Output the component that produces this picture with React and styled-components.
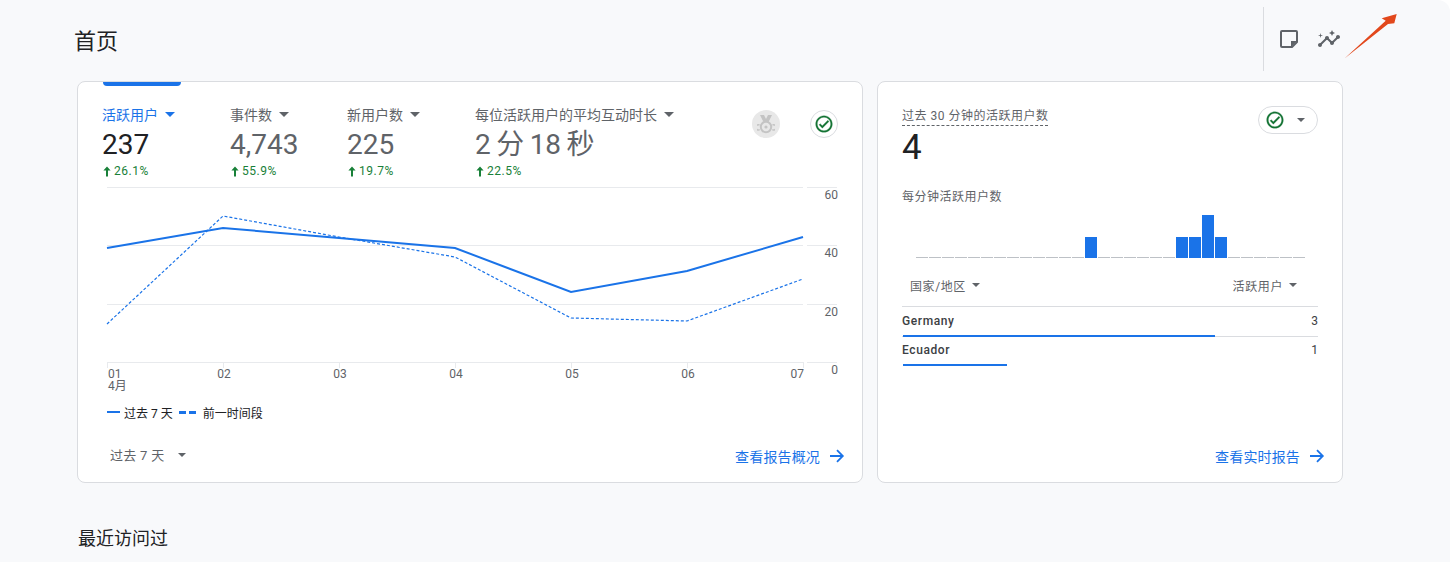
import React from "react";
import styled, { createGlobalStyle } from "styled-components";

const GlobalStyle = createGlobalStyle`
  html, body {
    margin: 0;
    padding: 0;
    background: #fff;
    font-family: Roboto, "Noto Sans CJK SC", sans-serif;
    color: #5f6368;
  }
`;

const Page = styled.div`
  position: relative;
  width: 1450px;
  height: 562px;
  overflow: hidden;
  background: #f8f9fb;
  border-top-right-radius: 12px;
`;

const Header = styled.header`
  display: flex;
  align-items: center;
  height: 81px;
  padding-left: 74px;
  box-sizing: border-box;
`;

const Title = styled.h1`
  margin: -4px 0 0;
  font-size: 22px;
  font-weight: 400;
  color: #202124;
`;

const HeaderTools = styled.div`
  display: flex;
  align-items: center;
  gap: 16px;
  height: 64px;
  margin: -3px 109px 0 auto;
  padding-left: 13px;
  border-left: 1px solid #dadce0;
`;

const Cards = styled.div`
  display: flex;
  gap: 14px;
  padding-left: 77px;
`;

const Card = styled.section`
  display: flex;
  flex-direction: column;
  box-sizing: border-box;
  width: ${(p) => p.$width}px;
  height: 402px;
  background: #fff;
  border: 1px solid #dadce0;
  border-radius: 8px;
`;

const TabMarker = styled.div`
  width: 78px;
  height: 4px;
  margin-left: 25px;
  background: #1a73e8;
  border-radius: 0 0 4px 4px;
`;

const MetricRow = styled.div`
  display: flex;
  height: 94px;
  padding: 19px 24px 0;
  box-sizing: border-box;
`;

const Metric = styled.div`
  width: ${(p) => p.$width}px;
  flex: none;
`;

const MetricLabel = styled.div`
  display: flex;
  align-items: center;
  gap: 7px;
  height: 18px;
  font-size: 14px;
  color: ${(p) => (p.$active ? "#1a73e8" : "#5f6368")};
`;

const Caret = styled.span`
  flex: none;
  width: 0;
  height: 0;
  border-left: ${(p) => p.$size || 5}px solid transparent;
  border-right: ${(p) => p.$size || 5}px solid transparent;
  border-top: ${(p) => p.$size || 5}px solid ${(p) => p.$color || "#5f6368"};
`;

const MetricValue = styled.div`
  height: 34px;
  margin-top: 5px;
  font-size: 28px;
  line-height: 34px;
  word-spacing: -1.5px;
  color: ${(p) => (p.$active ? "#202124" : "#5f6368")};
`;

const Delta = styled.div`
  display: flex;
  align-items: center;
  gap: 3px;
  height: 16px;
  margin-top: 1px;
  padding-left: 1px;
  font-size: 12px;
  letter-spacing: 0.5px;
  color: #188038;
`;

const MetricBadges = styled.div`
  display: flex;
  gap: 30px;
  margin-left: auto;
  margin-top: 5px;
`;

const RoundBadge = styled.div`
  display: flex;
  align-items: center;
  justify-content: center;
  box-sizing: border-box;
  width: 28px;
  height: 28px;
  border-radius: 50%;
  background: ${(p) => (p.$muted ? "#e8e8e8" : "#fff")};
  border: ${(p) => (p.$muted ? "none" : "1px solid #dadce0")};
`;

const ChartSvg = styled.svg`
  display: block;
  flex: none;
  margin-left: 22px;
`;

const AxisText = styled.text`
  font-size: 12px;
  fill: #5f6368;
  font-family: Roboto, "Noto Sans CJK SC", sans-serif;
`;

const Legend = styled.div`
  display: flex;
  align-items: center;
  height: 20px;
  margin: 7px 0 0 29px;
  font-size: 12px;
  color: #202124;
`;

const LegendLine = styled.span`
  width: 13px;
  height: 2px;
  margin-right: 4px;
  background: #1a73e8;
`;

const LegendDashes = styled.span`
  width: 17px;
  height: 3px;
  margin: 0 7px 0 6px;
  background: repeating-linear-gradient(90deg, #1a73e8 0 7px, transparent 7px 10px);
`;

const CardFooter = styled.div`
  display: flex;
  align-items: center;
  justify-content: space-between;
  height: 24px;
  margin-top: auto;
  margin-bottom: 14px;
  padding: 0 17px 0 32px;
`;

const RangeSelect = styled.div`
  display: flex;
  align-items: center;
  gap: 13px;
  margin-top: -3px;
  font-size: 13px;
  letter-spacing: 0.3px;
  color: #5f6368;
`;

const ReportLink = styled.a`
  display: flex;
  align-items: center;
  gap: 9px;
  margin-left: auto;
  font-size: 14px;
  letter-spacing: 0.15px;
  color: #1a73e8;
`;

const RealtimeTop = styled.div`
  display: flex;
  justify-content: space-between;
  padding: 24px 24px 0;
`;

const DashedTitle = styled.div`
  width: fit-content;
  height: 17px;
  padding-top: 2px;
  font-size: 12px;
  letter-spacing: 0.5px;
  line-height: 17px;
  border-bottom: 1px dashed #5f6368;
`;

const BigCount = styled.div`
  height: 44px;
  font-size: 35px;
  line-height: 44px;
  color: #202124;
`;

const PillSelect = styled.div`
  display: flex;
  align-items: center;
  gap: 12px;
  box-sizing: border-box;
  width: 60px;
  height: 28px;
  padding-left: 6px;
  border: 1px solid #dadce0;
  border-radius: 14px;
`;

const SubLabel = styled.div`
  margin: 18px 0 0 24px;
  height: 18px;
  font-size: 12px;
  letter-spacing: 0.5px;
  line-height: 18px;
`;

const Bars = styled.div`
  display: flex;
  align-items: flex-end;
  gap: 1px;
  height: 43px;
  margin: 9px 0 0 38px;
`;

const Bar = styled.div`
  width: 12px;
  height: ${(p) => p.$height || 1}px;
  background: ${(p) => (p.$height ? "#1a73e8" : "#bdc1c6")};
`;

const TableHead = styled.div`
  display: flex;
  align-items: center;
  justify-content: space-between;
  height: 42px;
  margin: 0 24px;
  padding: 6px 21px 0 8px;
  font-size: 12px;
  letter-spacing: 0.6px;
  border-bottom: 1px solid #dadce0;
`;

const HeadCell = styled.div`
  display: flex;
  align-items: center;
  gap: 6px;
`;

const Row = styled.div`
  position: relative;
  display: flex;
  justify-content: space-between;
  align-items: center;
  height: ${(p) => (p.$last ? 25 : 27)}px;
  margin: 0 24px;
  padding-bottom: ${(p) => (p.$last ? 3 : 2)}px;
  font-size: 12px;
  color: #3c4043;
  border-bottom: 1px solid ${(p) => (p.$last ? "transparent" : "#dadce0")};
`;

const RowName = styled.span`
  font-weight: 500;
  letter-spacing: 0.6px;
`;

const RowBar = styled.div`
  position: absolute;
  left: 1px;
  bottom: -1px;
  height: 2px;
  background: #1a73e8;
`;

const SectionTitle = styled.h2`
  margin: 46px 0 0 78px;
  font-size: 18px;
  line-height: 20px;
  font-weight: 400;
  color: #202124;
`;

const Annotation = styled.svg`
  position: absolute;
  left: 1340px;
  top: 10px;
`;

const metrics = [
  { label: "活跃用户", value: "237", delta: "26.1%", width: 128, active: true },
  { label: "事件数", value: "4,743", delta: "55.9%", width: 117 },
  { label: "新用户数", value: "225", delta: "19.7%", width: 128 },
  { label: "每位活跃用户的平均互动时长", value: "2 分 18 秒", delta: "22.5%", width: 240 },
];

const gridLines = [187.5, 245.5, 304.5, 362.5];
const ticks = [107, 223, 339, 455, 571, 687, 803];
const current = "107,248 223,228 339,238 455,248 571,292 687,271 803,237";
const previous = "107,324 223,216 339,237 455,257 571,318 687,321 803,279";

const barHeights = { 13: 21, 20: 21, 21: 21, 22: 43, 23: 21 };

const ArrowUp = () => (
  <svg width="8" height="11" viewBox="0 0 8 11">
    <path d="M4 0.5 L7.6 4.6 H5 V10.5 H3 V4.6 H0.4 Z" fill="#188038" />
  </svg>
);

const ArrowRight = () => (
  <svg width="16" height="16" viewBox="0 0 16 16">
    <path d="M1 8 H13.5 M8 2.2 L13.8 8 L8 13.8" fill="none" stroke="#1a73e8" strokeWidth="1.8" />
  </svg>
);

const CheckCircle = () => (
  <svg width="20" height="20" viewBox="0 0 24 24">
    <path
      fill="#137333"
      stroke="#137333"
      strokeWidth="0.3"
      d="M12 2C6.48 2 2 6.48 2 12s4.48 10 10 10 10-4.48 10-10S17.52 2 12 2zm0 18c-4.41 0-8-3.59-8-8s3.59-8 8-8 8 3.59 8 8-3.59 8-8 8zm4.59-12.42L10 14.17l-2.59-2.58L6 13l4 4 8-8z"
    />
  </svg>
);

const Medal = () => (
  <svg width="18" height="20" viewBox="0 0 18 20">
    <path d="M3 1 H7 L9 5 L11 1 H15 L11.5 8 H6.5 Z" fill="#c4c4c4" />
    <circle cx="9" cy="13" r="5.2" fill="none" stroke="#c4c4c4" strokeWidth="2" />
    <circle cx="9" cy="13" r="1.6" fill="#c4c4c4" />
    <path d="M2.5 11 a2.6 2.6 0 1 0 0.2 4.6 M15.5 11 a2.6 2.6 0 1 1 -0.2 4.6" fill="none" stroke="#c4c4c4" strokeWidth="1.6" />
  </svg>
);

const StickyNote = () => (
  <svg width="24" height="24" viewBox="0 0 24 24">
    <path
      fill="none"
      stroke="#5f6368"
      strokeWidth="2"
      strokeLinejoin="round"
      d="M5 4 H19 A1 1 0 0 1 20 5 V15 L15 20 H5 A1 1 0 0 1 4 19 V5 A1 1 0 0 1 5 4 Z"
    />
    <path fill="#5f6368" d="M14 14 H20 L14 20 Z" />
  </svg>
);

const Insights = () => (
  <svg width="24" height="24" viewBox="0 0 24 24">
    <path
      fill="#5f6368"
      d="M21 8c-1.45 0-2.26 1.44-1.93 2.51l-3.55 3.56c-.3-.09-.74-.09-1.04 0l-2.55-2.55C12.27 10.45 11.46 9 10 9c-1.45 0-2.27 1.44-1.93 2.52l-4.56 4.55C2.44 15.74 1 16.55 1 18c0 1.1.9 2 2 2 1.45 0 2.26-1.44 1.93-2.51l4.55-4.56c.3.09.74.09 1.04 0l2.55 2.55C12.73 16.55 13.54 18 15 18c1.45 0 2.27-1.44 1.93-2.52l3.56-3.55c1.07.33 2.51-.48 2.51-1.93 0-1.1-.9-2-2-2z"
    />
    <path fill="#5f6368" d="M15 9l.94-2.07L18 6l-2.06-.93L15 3l-.92 2.07L12 6l2.08.93zM3.5 11L4 9l2-.5L4 8l-.5-2L3 8l-2 .5L3 9z" />
  </svg>
);

const TrafficChart = () => (
  <ChartSvg width="745" height="215" viewBox="100 180 745 215">
    {gridLines.map((y) => (
      <g key={y} stroke="#e8eaed">
        <line x1="107" x2="803" y1={y} y2={y} />
        <line x1="807" x2="837" y1={y} y2={y} />
      </g>
    ))}
    {ticks.map((x) => (
      <line key={x} x1={x + 0.5} x2={x + 0.5} y1="362" y2="368" stroke="#e8eaed" />
    ))}
    {["01", "02", "03", "04", "05", "06", "07"].map((d, i) => (
      <AxisText key={d} x={i === 0 ? 108 : i === 6 ? 804 : ticks[i] + 1} y="378" textAnchor={i === 0 ? "start" : i === 6 ? "end" : "middle"}>
        {d}
      </AxisText>
    ))}
    <AxisText x="108" y="390">4月</AxisText>
    {["60", "40", "20", "0"].map((t, i) => (
      <AxisText key={t} x="838" y={[199, 257, 316, 374][i]} textAnchor="end">
        {t}
      </AxisText>
    ))}
    <polyline points={previous} fill="none" stroke="#1a73e8" strokeWidth="1.2" strokeDasharray="3 2" />
    <polyline points={current} fill="none" stroke="#1a73e8" strokeWidth="2" />
  </ChartSvg>
);

export default function App() {
  return (
    <Page>
      <GlobalStyle />
      <Header>
        <Title>首页</Title>
        <HeaderTools>
          <StickyNote />
          <Insights />
        </HeaderTools>
      </Header>
      <Cards>
        <Card $width={786}>
          <TabMarker />
          <MetricRow>
            {metrics.map((m) => (
              <Metric key={m.label} $width={m.width}>
                <MetricLabel $active={m.active}>
                  {m.label}
                  <Caret $color={m.active ? "#1a73e8" : undefined} />
                </MetricLabel>
                <MetricValue $active={m.active}>{m.value}</MetricValue>
                <Delta>
                  <ArrowUp />
                  {m.delta}
                </Delta>
              </Metric>
            ))}
            <MetricBadges>
              <RoundBadge $muted>
                <Medal />
              </RoundBadge>
              <RoundBadge>
                <CheckCircle />
              </RoundBadge>
            </MetricBadges>
          </MetricRow>
          <TrafficChart />
          <Legend>
            <LegendLine />
            过去 7 天
            <LegendDashes />
            前一时间段
          </Legend>
          <CardFooter>
            <RangeSelect>
              过去 7 天
              <Caret $size={4} />
            </RangeSelect>
            <ReportLink>
              查看报告概况
              <ArrowRight />
            </ReportLink>
          </CardFooter>
        </Card>
        <Card $width={466}>
          <RealtimeTop>
            <div>
              <DashedTitle>过去 30 分钟的活跃用户数</DashedTitle>
              <BigCount>4</BigCount>
            </div>
            <PillSelect>
              <CheckCircle />
              <Caret $size={4} />
            </PillSelect>
          </RealtimeTop>
          <SubLabel>每分钟活跃用户数</SubLabel>
          <Bars>
            {Array.from({ length: 30 }, (_, i) => (
              <Bar key={i} $height={barHeights[i]} />
            ))}
          </Bars>
          <TableHead>
            <HeadCell>
              国家/地区
              <Caret $size={4} />
            </HeadCell>
            <HeadCell>
              活跃用户
              <Caret $size={4} />
            </HeadCell>
          </TableHead>
          <Row>
            <RowName>Germany</RowName>
            3
            <RowBar style={{ width: "75%" }} />
          </Row>
          <Row $last>
            <RowName>Ecuador</RowName>
            1
            <RowBar style={{ width: "25%" }} />
          </Row>
          <CardFooter>
            <ReportLink>
              查看实时报告
              <ArrowRight />
            </ReportLink>
          </CardFooter>
        </Card>
      </Cards>
      <SectionTitle>最近访问过</SectionTitle>
      <Annotation width="60" height="52" viewBox="0 0 60 52">
        <path d="M4.5 48.5 L45.7 10.7 L41.7 8.3 L56.7 4 L54.3 13.3 L48 14 Z" fill="#e2481c" />
      </Annotation>
    </Page>
  );
}
